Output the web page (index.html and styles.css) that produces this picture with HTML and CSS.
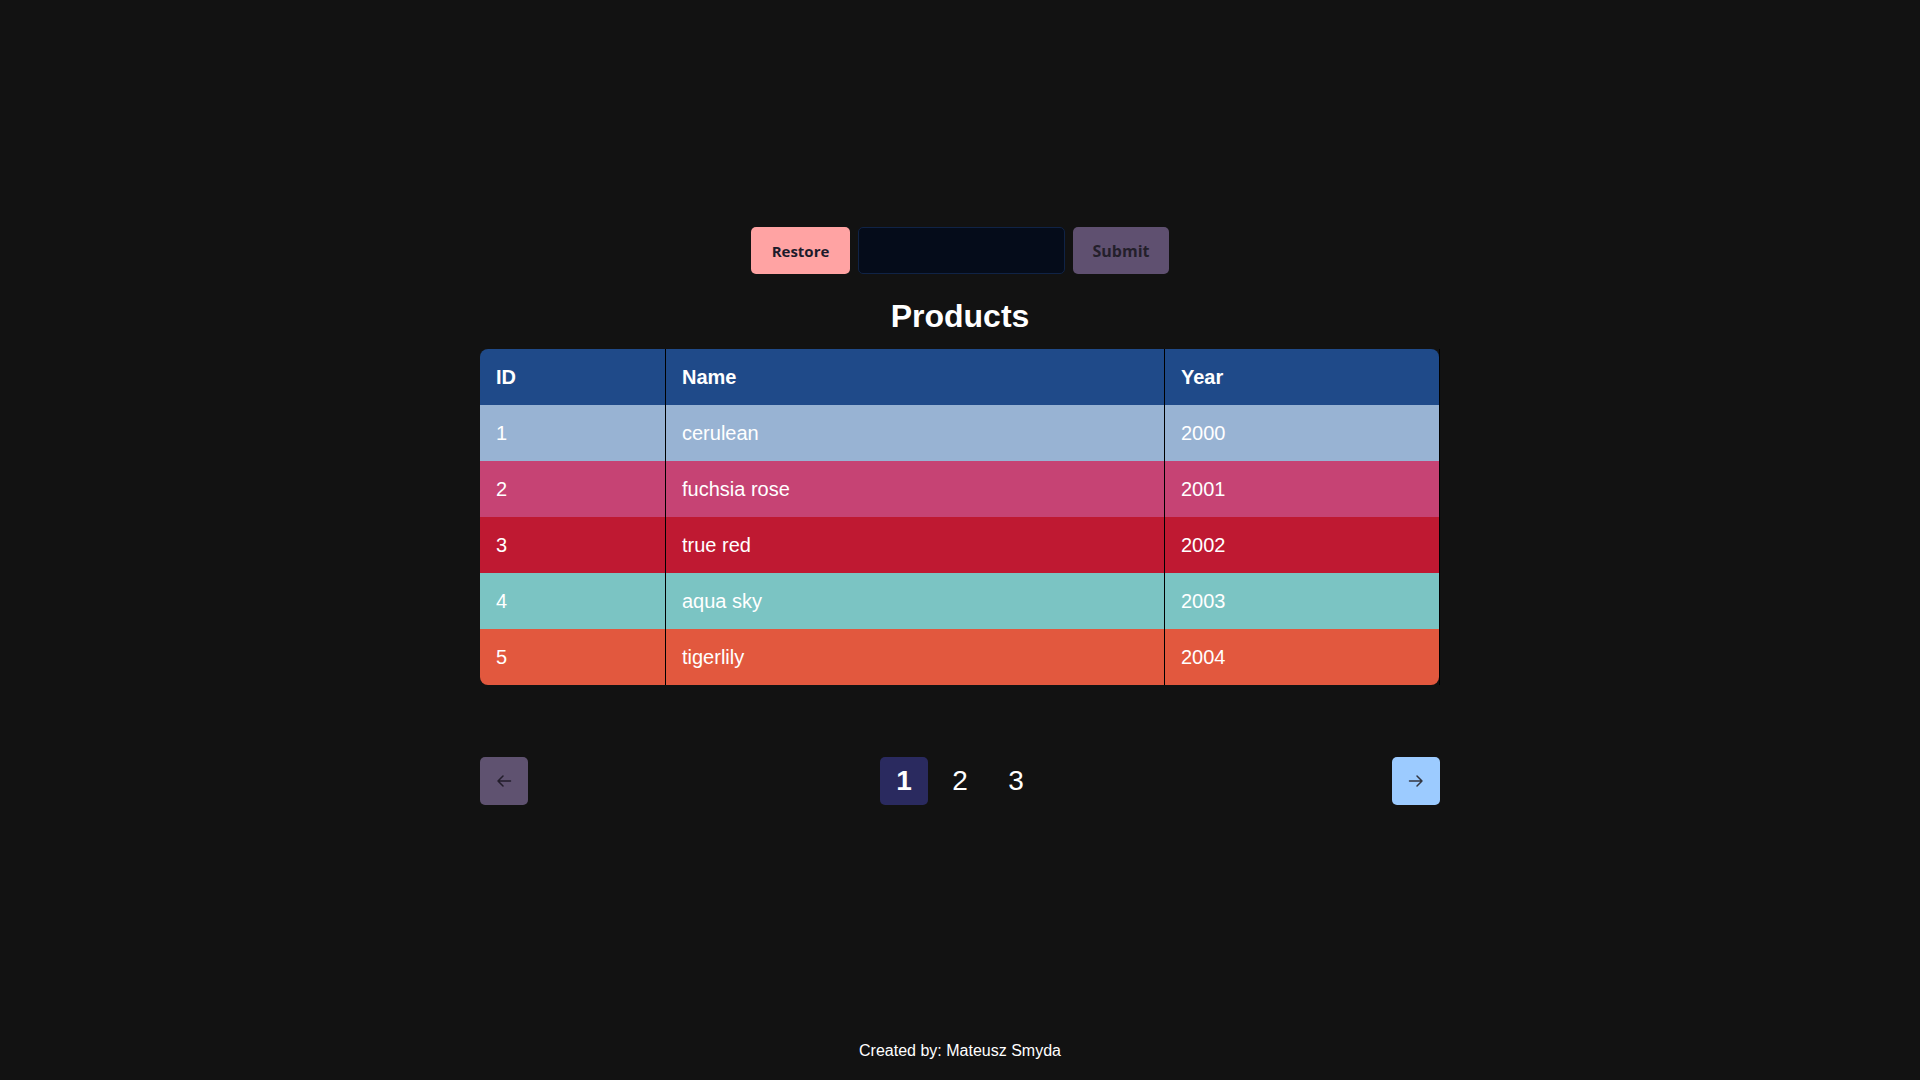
FILE: index.html
```html
<!DOCTYPE html>
<html lang="en">
<head>
<meta charset="utf-8">
<title>Products</title>
<link rel="stylesheet" href="styles.css">
</head>
<body>
<main class="main">
  <form class="controls">
    <button type="button" class="btn btn-restore">Restore</button>
    <input class="search" type="text">
    <button type="button" class="btn btn-submit">Submit</button>
  </form>
  <h1 class="title">Products</h1>
  <div class="table-wrap">
    <table class="table">
      <thead>
        <tr><th class="c-id">ID</th><th class="c-name">Name</th><th class="c-year">Year</th></tr>
      </thead>
      <tbody>
        <tr class="r1"><td>1</td><td>cerulean</td><td>2000</td></tr>
        <tr class="r2"><td>2</td><td>fuchsia rose</td><td>2001</td></tr>
        <tr class="r3"><td>3</td><td>true red</td><td>2002</td></tr>
        <tr class="r4"><td>4</td><td>aqua sky</td><td>2003</td></tr>
        <tr class="r5"><td>5</td><td>tigerlily</td><td>2004</td></tr>
      </tbody>
    </table>
  </div>
  <nav class="pager">
    <button type="button" class="nav-btn nav-prev" aria-label="Previous">
      <svg width="16" height="16" viewBox="0 0 16 16" fill="none" stroke="currentColor" stroke-width="1.5" stroke-linecap="round" stroke-linejoin="round"><path d="M14.5 8H2M7 3L2 8 7 13"/></svg>
    </button>
    <div class="pages">
      <span class="page active">1</span>
      <span class="page">2</span>
      <span class="page">3</span>
    </div>
    <button type="button" class="nav-btn nav-next" aria-label="Next">
      <svg width="16" height="16" viewBox="0 0 16 16" fill="none" stroke="currentColor" stroke-width="1.5" stroke-linecap="round" stroke-linejoin="round"><path d="M1.5 8H14M9 3L14 8 9 13"/></svg>
    </button>
  </nav>
</main>
<footer class="footer">Created by: Mateusz Smyda</footer>
</body>
</html>
```
FILE: styles.css
```css
html, body {
  margin: 0;
  padding: 0;
}
body {
  background: #121212;
  color: #ffffff;
  font-family: "Liberation Sans", Arial, sans-serif;
  min-height: 100vh;
  display: flex;
  flex-direction: column;
  align-items: center;
}
.main {
  padding-top: 227px;
  width: 960px;
  display: flex;
  flex-direction: column;
  align-items: center;
}
.controls {
  display: flex;
  gap: 8px;
  height: 47px;
  margin: 0;
}
.btn {
  border: none;
  border-radius: 5px;
  font-family: "Open Sans", "Noto Sans", sans-serif;
  font-weight: 700;
  font-size: 15px;
  cursor: pointer;
  padding: 0;
}
.btn-restore {
  width: 99px;
  background: #ffa3a3;
  color: #1c1b2b;
}
.btn-submit {
  width: 96px;
  background: #5f5070;
  color: #241f2b;
  font-size: 16px;
}
.search {
  width: 207px;
  box-sizing: border-box;
  height: 47px;
  background: #050c1a;
  border: 1px solid #102346;
  border-radius: 5px;
  color: #fff;
  padding: 0 10px;
  outline: none;
}
.title {
  font-size: 32px;
  font-weight: 700;
  line-height: 37px;
  margin: 24px 0 14px;
}
.table-wrap {
  width: 960px;
  box-sizing: border-box;
  border-right: 1px solid #000;
}
.table {
  width: 959px;
  border-collapse: separate;
  border-spacing: 0;
  border-radius: 8px;
  overflow: hidden;
  font-size: 20px;
  table-layout: fixed;
}
.table th, .table td {
  height: 56px;
  padding: 0 16px;
  text-align: left;
  box-sizing: border-box;
  color: #fff;
}
.table th {
  background: #1f4a89;
  font-weight: 700;
}
.table th + th, .table td + td {
  border-left: 1px solid #000;
}
.c-id { width: 185px; }
.c-name { width: 499px; }
.r1 td { background: #98b3d3; }
.r2 td { background: #c64374; }
.r3 td { background: #bf1932; }
.r4 td { background: #7bc4c3; }
.r5 td { background: #e2583e; }
.pager {
  margin-top: 72px;
  width: 960px;
  display: flex;
  align-items: center;
  justify-content: space-between;
}
.nav-btn {
  width: 48px;
  height: 48px;
  border: none;
  border-radius: 5px;
  display: flex;
  align-items: center;
  justify-content: center;
  padding: 0;
  cursor: pointer;
}
.nav-prev {
  background: #5f5270;
  color: #221d2a;
}
.nav-next {
  background: #9ccbff;
  color: #333640;
}
.pages {
  display: flex;
  gap: 8px;
}
.page {
  width: 48px;
  height: 48px;
  border-radius: 5px;
  display: flex;
  align-items: center;
  justify-content: center;
  font-size: 28px;
  color: #fff;
}
.page.active {
  background: #2a2a5f;
  font-weight: 700;
}
.footer {
  margin-top: auto;
  padding-bottom: 20px;
  font-size: 16px;
  line-height: 18px;
  color: #fff;
}
```
